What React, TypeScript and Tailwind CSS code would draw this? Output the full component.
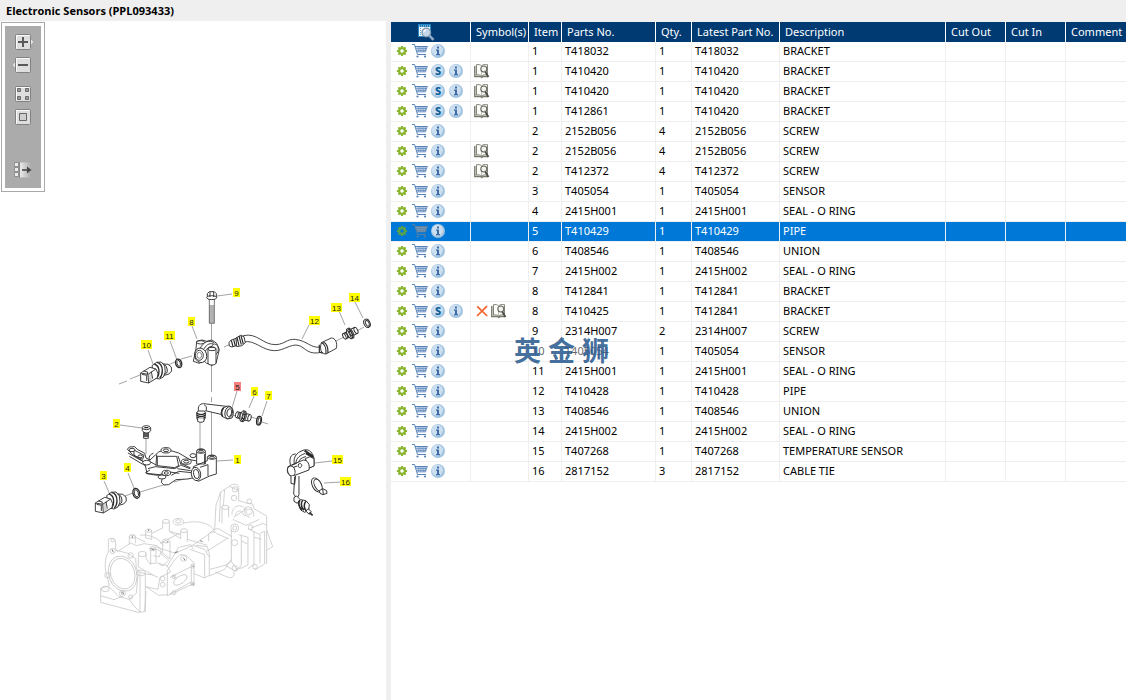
import type { ReactNode } from "react";

type Part = {
  item: number;
  partNo: string;
  qty: number;
  latest: string;
  description: string;
  superseded?: boolean;
  symbols?: ("book" | "cross")[];
};

const parts: Part[] = [
  { item: 1, partNo: "T418032", qty: 1, latest: "T418032", description: "BRACKET" },
  { item: 1, partNo: "T410420", qty: 1, latest: "T410420", description: "BRACKET", superseded: true, symbols: ["book"] },
  { item: 1, partNo: "T410420", qty: 1, latest: "T410420", description: "BRACKET", superseded: true, symbols: ["book"] },
  { item: 1, partNo: "T412861", qty: 1, latest: "T410420", description: "BRACKET", superseded: true, symbols: ["book"] },
  { item: 2, partNo: "2152B056", qty: 4, latest: "2152B056", description: "SCREW" },
  { item: 2, partNo: "2152B056", qty: 4, latest: "2152B056", description: "SCREW", symbols: ["book"] },
  { item: 2, partNo: "T412372", qty: 4, latest: "T412372", description: "SCREW", symbols: ["book"] },
  { item: 3, partNo: "T405054", qty: 1, latest: "T405054", description: "SENSOR" },
  { item: 4, partNo: "2415H001", qty: 1, latest: "2415H001", description: "SEAL - O RING" },
  { item: 5, partNo: "T410429", qty: 1, latest: "T410429", description: "PIPE" },
  { item: 6, partNo: "T408546", qty: 1, latest: "T408546", description: "UNION" },
  { item: 7, partNo: "2415H002", qty: 1, latest: "2415H002", description: "SEAL - O RING" },
  { item: 8, partNo: "T412841", qty: 1, latest: "T412841", description: "BRACKET" },
  { item: 8, partNo: "T410425", qty: 1, latest: "T412841", description: "BRACKET", superseded: true, symbols: ["cross", "book"] },
  { item: 9, partNo: "2314H007", qty: 2, latest: "2314H007", description: "SCREW" },
  { item: 10, partNo: "T405054", qty: 1, latest: "T405054", description: "SENSOR" },
  { item: 11, partNo: "2415H001", qty: 1, latest: "2415H001", description: "SEAL - O RING" },
  { item: 12, partNo: "T410428", qty: 1, latest: "T410428", description: "PIPE" },
  { item: 13, partNo: "T408546", qty: 1, latest: "T408546", description: "UNION" },
  { item: 14, partNo: "2415H002", qty: 1, latest: "2415H002", description: "SEAL - O RING" },
  { item: 15, partNo: "T407268", qty: 1, latest: "T407268", description: "TEMPERATURE SENSOR" },
  { item: 16, partNo: "2817152", qty: 3, latest: "2817152", description: "CABLE TIE" },
];

const selectedItem = 5;

const columns = ["Symbol(s)", "Item", "Parts No.", "Qty.", "Latest Part No.", "Description", "Cut Out", "Cut In", "Comment"];

const callouts = [
  { n: 9, x: 236, y: 293 },
  { n: 14, x: 354, y: 298 },
  { n: 13, x: 336, y: 308 },
  { n: 12, x: 314, y: 321 },
  { n: 8, x: 191, y: 322 },
  { n: 11, x: 169, y: 336 },
  { n: 10, x: 146, y: 345 },
  { n: 5, x: 237, y: 387 },
  { n: 6, x: 254, y: 392 },
  { n: 7, x: 268, y: 396 },
  { n: 2, x: 116, y: 424 },
  { n: 1, x: 237, y: 460 },
  { n: 15, x: 337, y: 460 },
  { n: 16, x: 345, y: 482 },
  { n: 4, x: 127, y: 468 },
  { n: 3, x: 103, y: 476 },
];

function GearIcon({ selected }: { selected: boolean }) {
  return (
    <svg className="h-3 w-3" viewBox="0 0 12 12" fill="none" stroke={selected ? "#5aa24a" : "#8ab52f"}>
      <circle cx="6" cy="6" r="2.9" strokeWidth="2.3" />
      <path d="M6 .9v1.600M6 9.500v1.600M.9 6h1.600M9.500 6h1.600M2.400 2.400l1.200 1.200M8.400 8.400l1.200 1.200M9.600 2.400L8.400 3.600M3.600 8.400L2.400 9.600" strokeWidth="2" />
    </svg>
  );
}

function CartIcon({ selected }: { selected: boolean }) {
  const stroke = selected ? "#5f7f9f" : "#5582b8";
  return (
    <svg className="h-4 w-[15px] overflow-visible" viewBox="0 0 15 16" fill="none" stroke={stroke}>
      <path d="M3.500 3h12l-2 6H5.500z" fill={selected ? "#7f9dbb" : "#d3e0ef"} stroke="none" />
      <path d="M0 1.500h2.500L5.500 11.500h8.500" strokeWidth="1" />
      <path d="M3 3.500h12.500" strokeWidth="1" />
      <path d="M4 5.500h11M4.500 7.500h9.500M5 9h8.500" strokeWidth="0.6" />
      <path d="M6 3.500l.5 5.500M8 3.500l.2 5.500M10 3.500v5.500M12 3.500l-.4 5.500M14 3.500l-1 5.500M15.500 3.500l-2 5.500" strokeWidth="0.6" />
      <circle cx="5.500" cy="13.500" r="1.100" fill={stroke} stroke="none" />
      <circle cx="13" cy="13.500" r="1.100" fill={stroke} stroke="none" />
    </svg>
  );
}

function Badge({ letter }: { letter: "S" | "i" }) {
  return (
    <svg className="h-[14px] w-[14px]" viewBox="0 0 14 14">
      <circle cx="7" cy="7" r="7" fill="#a3c4e0" />
      <circle cx="6.300" cy="6.200" r="5.600" fill="#cbdff0" />
      {letter === "S" ? (
        <text x="7" y="11" textAnchor="middle" fontSize="11" fontWeight="800" fill="#0b5f9c" fontFamily="Noto Sans, sans-serif">
          S
        </text>
      ) : (
        <path d="M6 2.500h2v2H6zM5 5.500h3v4.500h1v1.200H5V10h1V6.700H5z" fill="#3f6ba6" />
      )}
    </svg>
  );
}

function BookIcon() {
  return (
    <svg className="h-4 w-4" viewBox="0 0 16 16" fill="none">
      <path d="M.8 3v10.500h6l1 1 1-1h5.200" stroke="#77776a" strokeWidth="1.400" />
      <path d="M2.500 1.700c2-.4 4 0 5 1.200v10c-1.300-1-3-1.200-5-.9z" fill="#fdfdfa" stroke="#77776a" strokeWidth="0.9" />
      <path d="M7.500 2.900c1.300-1.300 3.400-1.600 6-1.200V12c-2-.3-4.500-.2-6 .9" fill="#fdfdfa" stroke="#77776a" strokeWidth="0.9" />
      <circle cx="9.800" cy="6" r="3" fill="#f1f1ee" stroke="#66665f" strokeWidth="1.100" />
      <path d="M11.300 8.800l3.200 5.200" stroke="#4c4c44" strokeWidth="1.800" />
    </svg>
  );
}

function CrossIcon() {
  return (
    <svg className="h-4 w-4" viewBox="0 0 16 16" stroke="#f2622a" strokeWidth="1.7">
      <path d="M3.2 3.4l10 9.6M13 3.2L3 13" />
    </svg>
  );
}

function SearchListIcon() {
  return (
    <svg className="h-4 w-4 overflow-visible" viewBox="0 0 16 16" fill="none">
      <path d="M.5.5h12v12H.5z" fill="#f3f8fc" stroke="#2286c4" />
      <path d="M1 1h11.500v2H1z" fill="#1b79b8" />
      <path d="M1 2h12" stroke="#bfe0f3" strokeDasharray="1 1" />
      <path d="M2.500 4v8" stroke="#4fa0d2" strokeDasharray="1 1" />
      <circle cx="8.300" cy="8.500" r="4.300" fill="#c3d5e6" stroke="#8298ad" strokeWidth="1.300" />
      <path d="M6 8.300a2.400 2.400 0 012.300-2.300" stroke="#fff" strokeWidth="1.200" />
      <path d="M11.600 11.800l3.900 4" stroke="#8fabc6" strokeWidth="2.600" />
    </svg>
  );
}

function ToolButton({ label, className = "", children }: { label: string; className?: string; children: ReactNode }) {
  return (
    <button type="button" aria-label={label} className={`block h-4 w-4 ${className}`}>
      <svg className="h-4 w-4 overflow-visible" viewBox="0 0 16 16" fill="none">
        {children}
      </svg>
    </button>
  );
}

const tile = <rect x="0.5" y="0.5" width="15" height="15" rx="1" fill="#dedede" stroke="#828282" />;
const tileShine = <path d="M1.5 14.5v-13h13" stroke="#fafafa" />;

function Toolbar() {
  return (
    <div className="absolute top-px left-px border border-[#a9a9a9] bg-white p-[3px]">
      <div className="flex w-9 flex-col items-center bg-[#ababab] pt-2 pb-[10px]">
        <ToolButton label="Zoom in">
          <path d="M15.5 5.5l2 2.5-2 2.5" fill="#dedede" stroke="#f5f5f5" />
          {tile}
          {tileShine}
          <path d="M8 3v10M3 8h10" stroke="#5a5a5a" strokeWidth="2" />
        </ToolButton>
        <ToolButton label="Zoom out" className="mt-[7px]">
          <path d="M.5 5.5l-2 2.5 2 2.5" fill="#dedede" stroke="#f5f5f5" />
          {tile}
          {tileShine}
          <path d="M3 8h10" stroke="#5a5a5a" strokeWidth="2" />
        </ToolButton>
        <ToolButton label="Fit to window" className="mt-[13px]">
          {tile}
          {tileShine}
          <path d="M2.5 2.5h3v3h-3zM10.5 2.5h3v3h-3zM2.5 10.5h3v3h-3zM10.5 10.5h3v3h-3z" fill="#999" stroke="#6b6b6b" />
        </ToolButton>
        <ToolButton label="Actual size" className="mt-[7px]">
          {tile}
          {tileShine}
          <path d="M4.5 4.5h7v7h-7z" fill="#d0d0d0" stroke="#666" />
        </ToolButton>
        <ToolButton label="Toggle list" className="mt-[37px]">
          <defs>
            <linearGradient id="panel-fade">
              <stop offset="0" stopColor="#ededed" />
              <stop offset="1" stopColor="#ababab" />
            </linearGradient>
          </defs>
          <path d="M4.5.5H16v15H4.5z" fill="url(#panel-fade)" />
          <path d="M-.5.5h4v4h-4zM-.5 5.5h4v4h-4zM-.5 10.5h4v4h-4z" fill="#ececec" stroke="#808080" strokeWidth="0.8" />
          <path d="M4.500 0v16" stroke="#777" strokeWidth="0.8" />
          <path d="M7 8h6" stroke="#484848" strokeWidth="1.6" />
          <path d="M12 4.6L16.5 8 12 11.4z" fill="#484848" />
        </ToolButton>
      </div>
    </div>
  );
}

// plug-style sensor, shared by items 3 and 10
function Sensor() {
  return (
    <g fill="#fff">
      <path d="M60 6l12-7 14 1 10 8 1 12-8 9-14 4-10-6z" />
      <ellipse cx="74" cy="14" rx="9" ry="15" transform="rotate(-20 74 14)" />
      <path d="M38 4l14-10 14-1 10 12 2 18-6 15-12 6-14-3z" />
      <path d="M52-6c10 2 17 12 17 25 0 10-3 17-8 22M45-1c9 3 14 11 14 22 0 8-2 15-5 19" strokeWidth="4" />
      <path d="M4 26L32 9l18 5 6 14-2 12-26 16-24-5z" />
      <path d="M4 26l22 4 24-16M26 30l2 26M13 20l12 3-1 7M36 22l4 21M8 30l14 3v17" />
      <path d="M26 31l9-5 4 20-10 8" fill="#888" stroke="none" opacity="0.35" />
    </g>
  );
}

// threaded union, drawn along the x axis and turned into place
function Union({ angle }: { angle: number }) {
  return (
    <g fill="#fff" transform={`rotate(${angle})`}>
      <path d="M4-10h15v20H4z" />
      <ellipse cx="19" cy="0" rx="5" ry="10" />
      <path d="M-20-9h16V9h-16z" />
      <path d="M-14-9c4 5 4 13 0 18M-10-9c4 5 4 13 0 18" fill="none" />
      <ellipse cx="-20" cy="0" rx="4" ry="9" />
      <path d="M-5-16h9c6 8 6 24 0 32h-9c5-8 5-24 0-32z" />
      <path d="M0-16c6 8 6 24 0 32" fill="none" strokeWidth="4" />
      <path d="M-5-16c-6 8-6 24 0 32" />
      <path d="M-3-6h9M-3 7h9" />
    </g>
  );
}

function PartsDrawing() {
  return (
    <svg className="block w-full" viewBox="0 21 386 679" fill="none" aria-label="Exploded view of electronic sensors">
      {/* inlet manifold, ghosted */}
      <g transform="translate(90 480) scale(.3333)" stroke="#c6c6c6" strokeWidth="2.4" strokeLinejoin="round">
        <path d="M55 178c10-6 20-4 22 8v24M55 178v38M55 216c-12 20-12 50-3 76l6 24M77 210l36 10 24 16 2 30 11 10" />
        <ellipse cx="98" cy="281" rx="36" ry="47" transform="rotate(-18 98 281)" />
        <ellipse cx="98" cy="281" rx="42" ry="54" transform="rotate(-18 98 281)" />
        <path d="M58 317l-26 8v42l112 30 20-2 4-62M32 347l40 12 26-10M57 320l30 30 30 8 22-18 6-70M150 397v-120l16 4v114M118 358l14 20 18 18" />
        <ellipse cx="46" cy="327" rx="12" ry="8" />
        <ellipse cx="153" cy="279" rx="13" ry="8" />
        <circle cx="97" cy="340" r="9" /><circle cx="97" cy="340" r="4" />
        <circle cx="68" cy="213" r="8" /><circle cx="68" cy="181" r="5" />
        <circle cx="122" cy="226" r="8" /><circle cx="52" cy="286" r="8" /><circle cx="122" cy="351" r="6" />
        <path d="M82 215l40-26 18 8 22-6 40 6 12 14-6 20-18-4M118 170v24M136 168v22M118 170c2-7 16-7 18-2M136 172l30 14M167 154v20l18 4v-26M150 166c20-4 40 4 56 14l14 16" />
        <ellipse cx="176" cy="152" rx="9" ry="5" /><ellipse cx="127" cy="170" rx="9" ry="5" />
        <ellipse cx="228" cy="124" rx="10" ry="6" /><ellipse cx="282" cy="152" rx="10" ry="6" />
        <ellipse cx="228" cy="183" rx="10" ry="6" /><ellipse cx="265" cy="125" rx="16" ry="10" /><ellipse cx="265" cy="124" rx="8" ry="5" />
        <path d="M218 124v20M238 124v30l34 22M272 152v24M292 152v34M218 183v36l22 18v-54M185 160l33-16M240 154l32 10" />
        <path d="M280 130c40-12 90 0 94 28M292 178l60 18M210 190l58-30M196 200l60 20 52-24 46-32" />
        <path d="M145 225v36l44 24M168 220v16l14 18v-48M190 210c12-4 24 2 26 14l20 16-18 18-16-10M178 206h20v44h-16" />
        <ellipse cx="157" cy="222" rx="12" ry="8" /><ellipse cx="188" cy="206" rx="9" ry="6" />
        <path d="M206 250l26 8 10 18-32 16-6 36-38-8M204 292l-18-8-20-2M168 320l38 26 26-2" />
        <path d="M232 288v60l80-38v-62l-24-22-18-2-16 16-22 32zM240 292l64-32v46l-66 36M232 258l34-56 36-8 8 14" />
        <ellipse cx="271" cy="300" rx="23" ry="11" transform="rotate(-34 271 300)" />
        <circle cx="252" cy="290" r="6" /><circle cx="308" cy="258" r="6" /><circle cx="308" cy="312" r="6" /><circle cx="252" cy="338" r="6" /><circle cx="281" cy="235" r="9" />
        <circle cx="218" cy="296" r="7" /><circle cx="218" cy="314" r="7" />
        <path d="M308 196l36 12 14 24v54l-14 8-34-14M318 196l34 4 8 30M300 208l44 16v68M350 214l64-40M358 288l46-20 20-30M354 164l18-16 14-2 40 24M356 184v-22c10-8 20-8 26 0l34 14" />
        <path d="M374 148l4-72 14-40 34-22c12-4 20 0 20 12v38M392 36l-4 90M404 28l-4 50M446 62l26 8 16 2 4 14 38 22v144M530 150l18 50-16 10M420 20l26 12M396 80v50M416 80v32" />
        <circle cx="435" cy="28" r="8" /><circle cx="432" cy="54" r="8" /><ellipse cx="406" cy="82" rx="11" ry="6" />
        <path d="M426 104c-2-30 38-38 44-6M436 108c0-18 22-20 24-4l20 8M470 90c14-8 26 4 20 20M424 150v94l16 24 14-12V164M446 164l28 8v82l-22 12M474 146l36 18v86M484 144l36-14 10 6M492 154v98l-18 14M510 160l14-6v98l-30 18M424 244l-18 12-46 12M406 256l30 18 18-12M376 276l38 16c16 4 22-8 16-16M428 118l40 18 40-18M430 112l40-26M454 182l18 10M494 172l20 6" />
        <circle cx="434" cy="144" r="12" /><circle cx="434" cy="144" r="6" /><circle cx="434" cy="188" r="9" /><circle cx="434" cy="264" r="8" /><circle cx="478" cy="64" r="7" /><circle cx="482" cy="142" r="7" /><circle cx="475" cy="92" r="12" /><circle cx="495" cy="260" r="7" />
        <path d="M232 183v4M176 148v5M127 168v5M184 206l8 4M280 233l5 8M66 208l4 9M94 336l8 6M250 288l4 4M306 256l5 5M306 310l5 5M330 182l8 3M254 218l10-3" stroke="#666" />
      </g>

      {/* centre lines and leaders */}
      <g stroke="#8c8c8c" strokeWidth="0.8">
        <path d="M211.500 324v68M211.500 397v5M211.500 407v50" />
        <path d="M200 418v34M146 437v17M119 384l8-3M130 379l10-4M168 365l9-4M181 359l11-3M224 347l9-4M336 341l8-4M357 331l7-4M233 415l6 2M251 417l7 2M262 422l6 2M125 496l8-3M140 492l30-9M174 482l20-6" />
        <path d="M217 296l15-2M192 326l5 13M309 325l-7 14M339 311l6 14M355 302l8 16M237 391l-5 17M254 396l-5 12M267 401l-5 15M170 341l7 19M148 350l5 14M120 425l22 3M217 461l16-1M128 473l6 15M104 481l7 16M315 463l17-2M324 483l17-1" />
      </g>

      <g transform="translate(180 280) scale(.3333)" stroke="#292929" strokeWidth="2.7" strokeLinejoin="round" fill="#fff">
        {/* bolt 9 */}
        <path d="M88 58v72h15V58z" stroke="#666" />
        <path d="M82 41l6-6h15l6 6v11H82z" /><ellipse cx="95" cy="53" rx="15" ry="6" /><path d="M90 36v15M101 36v15" fill="none" />
        <path d="M88 78h14M88 84h14M88 90h14M88 96h14M88 102h14M88 108h14M88 114h14M88 120h14M88 126h14" stroke="#555" />
        {/* bracket 8 */}
        <path d="M48 206l2-22 16-4 14 4 16-4 14 10 8 18-4 18-6 24-12 6-16-6-8-8-14 8-18-6z" />
        <ellipse cx="62" cy="187" rx="12" ry="5" /><ellipse cx="104" cy="208" rx="11" ry="16" />
        <path d="M60 206c10-20 26-28 42-18M70 210c8-14 16-22 30-18M76 214c4-8 10-14 18-14" fill="none" />
        <path d="M84 207c0-8 24-8 24 0v42c0 8-24 8-24 0z" /><ellipse cx="96" cy="207" rx="12" ry="5" />
        <ellipse cx="62" cy="226" rx="18" ry="22" transform="rotate(-15 62 226)" /><ellipse cx="58" cy="226" rx="12" ry="15" /><ellipse cx="58" cy="226" rx="7" ry="9" stroke="#777" />
        {/* pipe 12 */}
        <path d="M190 167c42-10 58 28 98 27 32-2 34-24 72-13 28 8 38 28 72 18l-4 17c-46 12-50-14-74-20-22-5-42 16-70 16-38 0-60-34-92-26z" stroke="#333" />
        <path d="M147 188l5-7 16-6 4 21-16 5-8-3z" /><path d="M168 174l14-8 10 4 4 18-10 9-16 3z" /><path d="M154 181l5 19M161 178l5 20M171 172l6 25M177 168l7 26M183 167l7 25" fill="none" strokeWidth="3.500" />
        <path d="M424 188l30-14c12 0 19 14 15 31l-31 17c-14 0-20-14-14-34z" /><path d="M424 188c10 3 15 18 14 34M430 186c10 3 15 18 14 33M418 194v22l10 4" fill="none" strokeWidth="3.500" />
        <g transform="translate(511 160)"><Union angle={-27} /></g>
        <ellipse cx="561" cy="130" rx="9" ry="13" transform="rotate(-25 561 130)" strokeWidth="3" /><ellipse cx="562" cy="130" rx="5" ry="9" transform="rotate(-25 562 130)" />
        {/* pipe 5 */}
        <path d="M55 396v-12c2-12 12-15 24-12l68 8-3 28-64-15c-6-2-7 1-7 4v3z" /><path d="M72 374l7 6v12" fill="none" />
        <path d="M50 397l6-4h17l4 5-2 15c2 10-20 16-24 4z" /><path d="M50 399c8 7 20 6 26 0M50 405c8 7 20 6 26 0M51 411c8 7 20 6 25 0" fill="none" strokeWidth="4" />
        <path d="M53 415v9c4 4 15 4 19 0v-9" />
        <path d="M128 384l16-6c16 0 20 20 12 36l-14 3-16-8c-4-6-3-16 2-25z" /><ellipse cx="146" cy="398" rx="11" ry="18" transform="rotate(12 146 398)" /><ellipse cx="148" cy="398" rx="7" ry="12" transform="rotate(12 148 398)" /><path d="M131 384c-7 8-7 18-3 26" fill="none" strokeWidth="4" />
        <g transform="translate(190 409)"><Union angle={14} /></g>
        <ellipse cx="237" cy="422" rx="7" ry="13" transform="rotate(10 237 422)" strokeWidth="4" /><ellipse cx="238" cy="422" rx="4" ry="9" transform="rotate(10 238 422)" />
      </g>

      <g transform="translate(90 320) scale(.3333)" stroke="#292929" strokeWidth="2.7" strokeLinejoin="round" fill="#fff">
        <g transform="translate(148 133)"><Sensor /></g>
        <g transform="translate(12 523)"><Sensor /></g>
        <ellipse cx="266" cy="130" rx="9" ry="13" transform="rotate(-15 266 130)" strokeWidth="4" /><ellipse cx="266" cy="130" rx="5" ry="9" transform="rotate(-15 266 130)" />
        <ellipse cx="139" cy="520" rx="10" ry="15" transform="rotate(-15 139 520)" strokeWidth="4" /><ellipse cx="139" cy="520" rx="6" ry="11" transform="rotate(-15 139 520)" />
        {/* screw 2 */}
        <path d="M161 335v20h14v-20z" /><path d="M157 323v9c4 9 21 9 25 0v-9z" /><ellipse cx="169" cy="323" rx="12" ry="6" /><path d="M163 323h12M161 342h14M161 348h14" strokeWidth="4" />
        {/* bracket 1 */}
        <path d="M112 388l6-7 16-1 8 8 22 12 4 14 12 6 26-24 14-6 26 3 20 6 34 20 42 8 2 28-14 14-36 8-36 2-22 15-14 1-8-8 5-20-24-2-24-4-4-20-6-16-34-22z" />
        <path d="M114 399l46 26 6 14M118 409l44 26M132 390v16l26 12 4-12zM202 409h58l6 28-12 6-52-6zM200 404l-2 33M264 408l10 28 26 10M168 460l40 4 30-8 30 4M174 446l22-6 58 6 18-10M190 400c-14 4-16 18-8 26l18 10M244 466l22-12 38 4M180 450l-14 8M272 430l30 14M262 446l40 6" fill="none" />
        <ellipse cx="126" cy="390" rx="9" ry="5" /><ellipse cx="151" cy="409" rx="7" ry="4" /><ellipse cx="170" cy="428" rx="12" ry="7" /><ellipse cx="228" cy="391" rx="15" ry="8" /><ellipse cx="228" cy="391" rx="8" ry="4" /><ellipse cx="289" cy="425" rx="15" ry="8" /><ellipse cx="289" cy="425" rx="8" ry="4" /><ellipse cx="229" cy="459" rx="13" ry="8" /><ellipse cx="229" cy="459" rx="6" ry="4" /><ellipse cx="216" cy="471" rx="12" ry="6" /><ellipse cx="309" cy="407" rx="9" ry="6" />
        <path d="M320 394c0-10 26-10 26 0v38h-26zM352 412c0-9 27-9 27 0v50l-20 6-34 16-12-8-3-36 42-18z" /><ellipse cx="333" cy="394" rx="13" ry="6" /><ellipse cx="333" cy="394" rx="7" ry="3" /><ellipse cx="366" cy="412" rx="13" ry="6" /><ellipse cx="366" cy="412" rx="7" ry="3" />
        <path d="M330 442l24-8v34M344 432v-30" /><ellipse cx="318" cy="462" rx="14" ry="20" transform="rotate(-10 318 462)" /><ellipse cx="319" cy="462" rx="8" ry="14" transform="rotate(-10 319 462)" />
      </g>

      {/* temperature sensor 15 and cable tie 16 */}
      <g transform="translate(260 440) scale(.3333)" stroke="#292929" strokeWidth="2.8" strokeLinejoin="round" fill="#fff">
        <path d="M93 82c-8-28 0-40 14-40M104 80c-6-26 2-42 28-50 18-4 26 10 30 24v24l-16 6" />
        <path d="M108 76c-2-18 6-28 28-36M116 74c0-14 4-20 22-24" fill="none" />
        <path d="M134 32l24 16M138 40l22 12" fill="none" strokeWidth="6" /><path d="M136 56l14-6 12 6v22l-14 6z" />
        <path d="M84 80l46-20c14 0 20 14 17 30l-48 18c-16-2-20-14-15-28z" /><ellipse cx="94" cy="93" rx="11" ry="15" transform="rotate(-15 94 93)" /><path d="M96 75l14-5M100 82l12-4M116 72c6-4 12 2 8 8s-12 2-8-8z" />
        <path d="M93 108v22l11 3 3-26M104 110l-3 52 10 14 6-12V108" />
        <path d="M102 172l8-4 10 10-8 12-10-6z" />
        <path d="M114 186l8-7 16 3 10 12-2 16-12 7-12-7z" /><path d="M120 181c-6 8-4 20 6 28M128 181c-6 8-4 20 4 30M138 184c-8 8-6 22 2 30" fill="none" strokeWidth="4.500" />
        <path d="M144 206l10 9-6 8-10-9z" /><path d="M148 218l10 8" strokeWidth="5" />
        <ellipse cx="170" cy="135" rx="13" ry="23" transform="rotate(-27 170 135)" /><ellipse cx="174" cy="135" rx="10" ry="19" transform="rotate(-27 174 135)" />
        <path d="M178 152l10-6 12 6 1 8-12 4-9-4zM188 146l2 16" />
      </g>

      <g fontFamily="Liberation Sans, sans-serif" fontSize="8" textAnchor="middle">
        {callouts.map(({ n, x, y }) => (
          <g key={n}>
            <rect x={n > 9 ? x - 5 : x - 3} y={y - 5} width={n > 9 ? 11 : 7} height="9" fill={n === selectedItem ? "#f77f7f" : "#ffff00"} />
            <text x={x + 0.5} y={y + 3} fill="#222">
              {n}
            </text>
          </g>
        ))}
      </g>
    </svg>
  );
}

function PartRow({ part }: { part: Part }) {
  const selected = part.item === selectedItem;
  const cells = [part.item, part.partNo, part.qty, part.latest, part.description, "", "", ""];

  return (
    <tr className={selected ? "bg-[#0078d7] text-white" : "bg-white text-black"}>
      <td className="h-5 border-r border-b border-[#efefef] p-0 pb-0.5 pl-[5px]">
        <div className="flex items-center gap-1">
          <GearIcon selected={selected} />
          <CartIcon selected={selected} />
          {part.superseded && <Badge letter="S" />}
          <Badge letter="i" />
        </div>
      </td>
      <td className="h-5 border-r border-b border-[#efefef] p-0 pb-0.5 pl-[3px]">
        <div className="flex items-center gap-px">
          {part.symbols?.map((symbol) => (symbol === "book" ? <BookIcon key={symbol} /> : <CrossIcon key={symbol} />))}
        </div>
      </td>
      {cells.map((cell, i) => (
        <td key={i} className="h-5 border-r border-b border-[#efefef] p-0 pb-0.5 pl-[3px] whitespace-nowrap last:border-r-0">
          {cell}
        </td>
      ))}
    </tr>
  );
}

export default function App() {
  return (
    <div className="flex min-h-screen flex-col bg-white font-['Noto_Sans',sans-serif] text-[11px] leading-4 text-black">
      <header className="h-[21px] bg-[#efefef] px-1.5 pt-[3px]">
        <h1 className="font-['Open_Sans',sans-serif] font-bold">Electronic Sensors (PPL093433)</h1>
      </header>

      <main className="flex flex-1">
        <section className="relative w-[386px] shrink-0">
          <PartsDrawing />
          <Toolbar />
        </section>

        <section className="relative min-w-0 flex-1 overflow-hidden border-l-[5px] border-[#efefef]">
          <table className="w-full table-fixed border-separate border-spacing-0 border-t border-[#efefef]">
            <colgroup>
              <col className="w-20" />
              <col className="w-[58px]" />
              <col className="w-[33px]" />
              <col className="w-[94px]" />
              <col className="w-9" />
              <col className="w-[88px]" />
              <col className="w-[166px]" />
              <col className="w-[60px]" />
              <col className="w-[60px]" />
              <col />
            </colgroup>
            <thead>
              <tr className="bg-[#003a73] text-left text-white">
                <th className="h-5 border-r border-white p-0 pl-[27px]" aria-label="Actions">
                  <SearchListIcon />
                </th>
                {columns.map((name) => (
                  <th key={name} className="h-5 border-r border-white p-0 pl-[5px] font-normal whitespace-nowrap last:border-r-0">
                    {name}
                  </th>
                ))}
              </tr>
            </thead>
            <tbody>
              {parts.map((part, i) => (
                <PartRow key={i} part={part} />
              ))}
            </tbody>
          </table>

          <div className="pointer-events-none absolute top-[319px] left-[123px] flex h-5 items-center gap-[7px] bg-white/40 font-['Noto_Sans_CJK_SC',sans-serif] text-[27px] leading-5 font-bold text-[#2c5c90]/90">
            <span>英</span>
            <span>金</span>
            <span>狮</span>
          </div>
        </section>
      </main>
    </div>
  );
}
